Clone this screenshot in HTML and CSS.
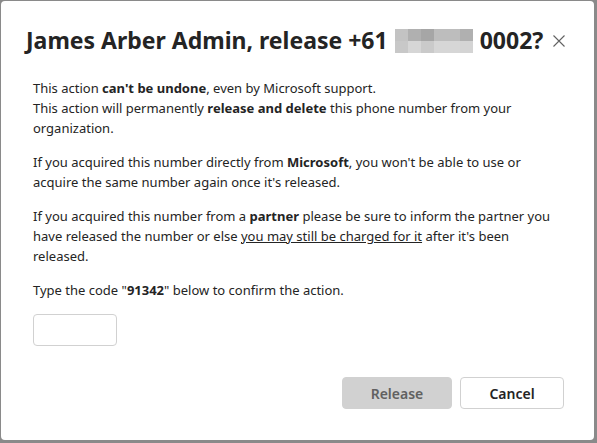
FILE: index.html
```html
<!DOCTYPE html>
<html>
<head>
<meta charset="utf-8">
<link rel="stylesheet" href="styles.css">
</head>
<body>
<div class="dialog">
  <div class="header">
    <h1 class="title">James Arber Admin, release +61 <span class="mosaic"><span class="px a"></span><span class="px b"></span><span class="px c"></span><span class="px d"></span><span class="px e"></span><span class="px f"></span><span class="px g"></span><span class="px h"></span><span class="px i"></span><span class="px j"></span><span class="px k"></span><span class="px l"></span></span> 0002?</h1>
    <button class="close" aria-label="Close"><svg width="14" height="14" viewBox="0 0 14 14"><path d="M1.5 1.5 L12.5 12.5 M12.5 1.5 L1.5 12.5" stroke="#616161" stroke-width="1.1" fill="none"/></svg></button>
  </div>
  <div class="content">
    <p>This action <b>can't be undone</b>, even by Microsoft support.<br>This action will permanently <b>release and delete</b> this phone number from your organization.</p>
    <p>If you acquired this number directly from <b>Microsoft</b>, you won't be able to use or acquire the same number again once it's released.</p>
    <p>If you acquired this number from a <b>partner</b> please be sure to inform the partner you have released the number or else <u>you may still be charged for it</u> after it's been released.</p>
    <p>Type the code "<b>91342</b>" below to confirm the action.</p>
    <input class="code" type="text">
  </div>
  <div class="footer">
    <button class="btn primary">Release</button>
    <button class="btn secondary">Cancel</button>
  </div>
</div>
</body>
</html>
```
FILE: styles.css
```css
html, body {
  margin: 0;
  padding: 0;
}
body {
  background: #8a8a8a;
  width: 597px;
  height: 443px;
  overflow: hidden;
  font-family: "Noto Sans", "Open Sans", sans-serif;
  color: #242424;
}
.dialog {
  margin: 1px 0 0 1px;
  width: 593px;
  height: 439px;
  background: #fff;
  border-radius: 4px;
  box-sizing: border-box;
  display: flex;
  flex-direction: column;
}
.header {
  display: flex;
  align-items: center;
  padding: 25px 30px 0 25px;
  height: 28px;
}
.title {
  margin: 0;
  font-size: 23px;
  font-weight: 700;
  line-height: 28px;
  white-space: nowrap;
  display: flex;
  align-items: center;
  gap: 7px;
  color: #242424;
}
.mosaic {
  display: grid;
  grid-template-columns: repeat(6, 13px);
  grid-template-rows: 12px 12px;
  margin: 2px 0 0 0;
}
.px.a { background: #c3c3c3; }
.px.b { background: #b0b0b0; }
.px.c { background: #a6a6a6; }
.px.d { background: #bdbdbd; }
.px.e { background: #bdbdbd; }
.px.f { background: #b0b0b0; }
.px.g { background: #c8c8c8; }
.px.h { background: #d6d6d6; }
.px.i { background: #cacaca; }
.px.j { background: #d6d6d6; }
.px.k { background: #d6d6d6; }
.px.l { background: #d4d4d4; }
.close {
  margin: 2px 0 0 9px;
  border: none;
  background: none;
  padding: 0;
  width: 14px;
  height: 14px;
  display: flex;
}
.content {
  padding: 24px 30px 0 32px;
  font-size: 13px;
  line-height: 20px;
}
.content p {
  margin: 0 0 14px 0;
}
.content b {
  font-weight: 700;
}
.code {
  display: block;
  width: 84px;
  height: 32px;
  box-sizing: border-box;
  border: 1px solid #d1d1d1;
  border-radius: 4px;
  margin-top: 0;
  padding: 0 8px;
}
.footer {
  margin-top: auto;
  padding: 0 30px 31px 0;
  display: flex;
  justify-content: flex-end;
  gap: 8px;
}
.btn {
  height: 32px;
  border-radius: 4px;
  font-family: inherit;
  font-size: 14px;
  font-weight: 600;
  box-sizing: border-box;
}
.primary {
  width: 110px;
  background: #d1d1d1;
  border: 1px solid #d1d1d1;
  color: #616161;
}
.secondary {
  width: 104px;
  background: #fff;
  border: 1px solid #d1d1d1;
  color: #242424;
}
```
